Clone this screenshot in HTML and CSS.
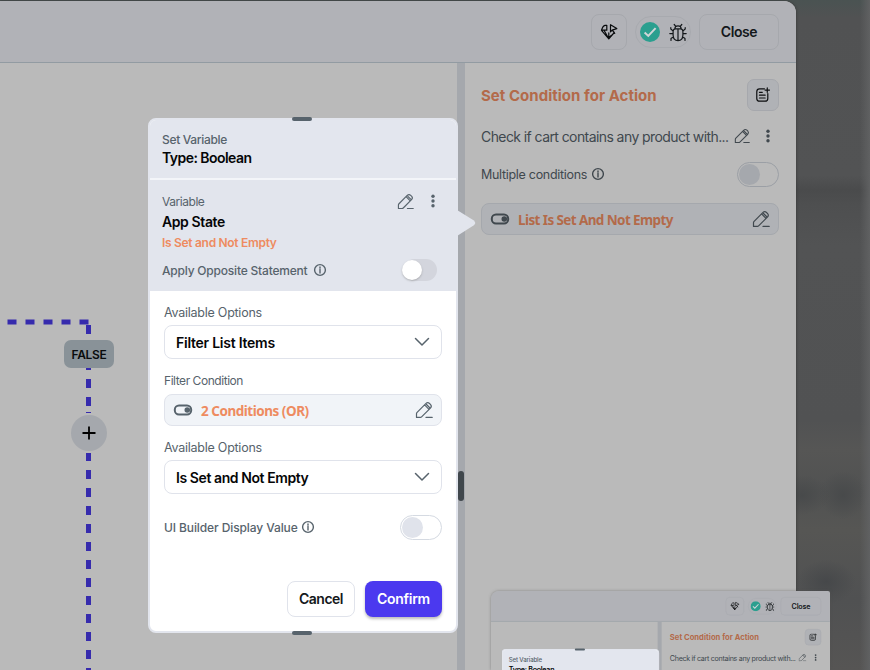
FILE: index.html
```
<!DOCTYPE html>
<html lang="en">
<head>
<meta charset="utf-8">
<title>Action Flow Editor</title>
<link rel="stylesheet" href="styles.css">
</head>
<body>
<svg class="defs" aria-hidden="true">
  <symbol id="pencil" viewBox="0 0 18 18"><path d="M1.500 16.400V12.700Q1.500 12 2.100 11.400L10.800 2.600Q12.700.9 14.500 2.500L15.600 3.600Q17.100 5.300 15.400 7.100L6.600 15.900Q6.100 16.400 5.400 16.400ZM9.600 3.900 14 8.300M11.500 3.500 14.500 6.500M11 16.400H17.200"/></symbol>
  <symbol id="info" viewBox="0 0 14 14"><circle cx="7" cy="7" r="5.4"/><path d="M7 6.3V10M7 3.9V5.1"/></symbol>
  <symbol id="dots" viewBox="0 0 6 16"><circle cx="3" cy="3.2" r="1.7"/><circle cx="3" cy="8" r="1.7"/><circle cx="3" cy="12.8" r="1.7"/></symbol>
  <symbol id="switch" viewBox="0 0 20 12"><rect x="1.8" y="1.6" width="16.4" height="8.8" rx="4.2"/><circle class="dot" cx="14.3" cy="6" r="2.8"/></symbol>
  <symbol id="chevron" viewBox="0 0 16 10"><path d="M1.5 1.5 8 8 14.5 1.5"/></symbol>
  <symbol id="bug" viewBox="0 0 18 20"><path d="M4.1 8.2Q4.3 6 6.3 5.8H11.7Q13.7 6 13.9 8.2V12Q13.9 17.5 9 17.7 4.1 17.5 4.1 12ZM5.8 5.7Q6 2.9 9 2.9T12.2 5.7M6.6 3.2 5.2 1.5M11.4 3.2 12.8 1.5M9 6V17.5M4 10.6H.8M14 10.6H17.2M4.2 7.9 1.8 6.1V4.5M13.8 7.9 16.2 6.1V4.5M4.5 13.8 2 15.5V17.4M13.5 13.8 16 15.5V17.4"/></symbol>
  <symbol id="gem" viewBox="0 0 18 18"><path d="M6.800 2.300H5Q2.800 2.800 1.500 7.200H6.800ZM1.500 7.300 8.800 15.800 14.300 9.500M4 7.300 8.800 15.800V9.800M10.500 1.700V8.800L12.100 7.100 16.800 5.600ZM12.300 7.200 14.700 10.400M6.500 12.300 8.800 15.200 11.200 12.300"/></symbol>
  <symbol id="note" viewBox="0 0 18 18"><path d="M10.6 2.1H5.2Q2 2.1 2 5.3V12.8Q2 16 5.2 16H11.2Q14.4 16 14.4 12.8V7.4M13.8 1V6M11.3 3.5H16.3M5 6H8.2M5 9.2H11.4M5 12.4H11.4"/></symbol>
  <symbol id="check" viewBox="0 0 20 20"><circle cx="10" cy="10" r="10"/><path d="M4.6 10.4 8.3 13.9 15.6 6.1"/></symbol>
</svg>

<main class="window">
  <header class="bar">
    <span class="tool"><svg class="icon gem"><use href="#gem"/></svg></span>
    <span class="status"><svg class="check"><use href="#check"/></svg><svg class="icon bug"><use href="#bug"/></svg></span>
    <span class="close">Close</span>
  </header>
  <div class="work">
    <section class="canvas">
      <svg class="wires" viewBox="0 0 457 607"><path d="M7.500 259H89" stroke-dasharray="9 9"/><path d="M88.500 262V350" stroke-dasharray="9 9"/><path d="M88.500 349V350"/><path d="M88.500 390V607" stroke-dasharray="9 9" stroke-dashoffset="1"/></svg>
      <span class="branch">FALSE</span>
      <span class="add"><svg viewBox="0 0 14 14"><path d="M7 .5V13.500M.5 7H13.500"/></svg></span>
    </section>
    <div class="splitter"></div>
    <aside class="panel">
      <div class="row head"><h1>Set Condition for Action</h1><span class="note"><svg class="icon"><use href="#note"/></svg></span></div>
      <div class="row desc"><span class="summary">Check if cart contains any product with...</span><svg class="icon pen"><use href="#pencil"/></svg><svg class="more"><use href="#dots"/></svg></div>
      <div class="row multi"><span class="multi-label">Multiple conditions</span><svg class="icon info"><use href="#info"/></svg><span class="toggle"></span></div>
      <div class="chip"><svg class="icon sw"><use href="#switch"/></svg><span class="chip-text list">List Is Set And Not Empty</span><svg class="icon pen"><use href="#pencil"/></svg></div>
    </aside>
  </div>
</main>

<i class="scroll"></i>

<section class="dialog">
  <i class="grip top"></i><i class="grip bottom"></i>
  <svg class="pointer" viewBox="0 0 20 26"><path d="M0 0 16.500 10.200Q20 13 16.500 15.600L0 26Z"/></svg>
  <div class="title"><span class="t-set">Set Variable</span><strong class="t-type">Type: Boolean</strong></div>
  <div class="variable">
    <div class="row var"><span class="t-var">Variable</span><svg class="icon pen"><use href="#pencil"/></svg><svg class="more"><use href="#dots"/></svg></div>
    <strong class="t-app">App State</strong>
    <span class="t-is">Is Set and Not Empty</span>
    <div class="row opp"><span class="t-opp">Apply Opposite Statement</span><svg class="icon info"><use href="#info"/></svg><span class="slide"></span></div>
  </div>
  <div class="form">
    <label class="t-avail">Available Options</label>
    <div class="select"><span class="t-filter">Filter List Items</span><svg class="icon chev"><use href="#chevron"/></svg></div>
    <label class="t-cond">Filter Condition</label>
    <div class="chip"><svg class="icon sw"><use href="#switch"/></svg><span class="chip-text two">2 Conditions (OR)</span><svg class="icon pen"><use href="#pencil"/></svg></div>
    <label class="t-avail">Available Options</label>
    <div class="select"><span class="t-not">Is Set and Not Empty</span><svg class="icon chev"><use href="#chevron"/></svg></div>
    <div class="row display"><span class="t-ui">UI Builder Display Value</span><svg class="icon info"><use href="#info"/></svg><span class="toggle"></span></div>
    <div class="actions"><button class="cancel">Cancel</button><button class="confirm">Confirm</button></div>
  </div>
</section>

<div class="preview">
  <div class="mini">
    <header class="bar">
      <span class="tool"><svg class="icon gem"><use href="#gem"/></svg></span>
      <span class="status"><svg class="check"><use href="#check"/></svg><svg class="icon bug"><use href="#bug"/></svg></span>
      <span class="close">Close</span>
    </header>
    <div class="work">
      <section class="canvas"></section>
      <div class="splitter"></div>
      <aside class="panel">
        <div class="row head"><h1>Set Condition for Action</h1><span class="note"><svg class="icon"><use href="#note"/></svg></span></div>
        <div class="row desc"><span class="summary">Check if cart contains any product with...</span><svg class="icon pen"><use href="#pencil"/></svg><svg class="more"><use href="#dots"/></svg></div>
      </aside>
    </div>
    <section class="dialog">
      <i class="grip top"></i>
      <div class="title"><span class="t-set">Set Variable</span><strong class="t-type">Type: Boolean</strong></div>
    </section>
  </div>
</div>
</body>
</html>
```
FILE: styles.css
```
* { box-sizing: border-box; }
body {
  margin: 0; width: 870px; height: 670px; overflow: hidden; position: relative;
  font-family: Inter, "Liberation Sans", sans-serif; color: #57636c;
  background:
    linear-gradient(90deg, transparent 860px, #606162 870px),
    radial-gradient(ellipse 28px 20px at 802px 495px, #484a4b, transparent),
    radial-gradient(ellipse 24px 24px at 843px 495px, #484a4b, transparent),
    radial-gradient(ellipse 30px 22px at 826px 582px, #46484a, transparent),
    linear-gradient(180deg, #4a5352 0, #515253 18px, #525354 175px, #4a4b4c 190px, #4e4f50 205px, #525354 245px, #515253 420px, #565655 450px, #515252 490px, #565654 530px, #505152 600px, #565554 670px);
}
.defs { position: absolute; width: 0; height: 0; }
svg { display: block; flex: none; }
.icon { fill: none; stroke: currentColor; stroke-width: 1.35; stroke-linejoin: round; stroke-linecap: round; }
.row { display: flex; align-items: center; white-space: nowrap; }
.window { display: flex; flex-direction: column; width: 796px; height: 669px; margin-top: 1px; border-radius: 0 12px 0 0; overflow: hidden; background: #bababa; box-shadow: 0 0 3px #333; }
.bar { display: flex; align-items: center; justify-content: flex-end; flex: none; height: 62px; padding-right: 17px; background: #b1b2b7; border-bottom: 1px solid #929ba2; color: #14181b; }
.tool { display: grid; place-items: center; width: 36px; height: 36px; border: 1px solid #a6a8ad; border-radius: 8px; }
.gem { width: 18px; height: 18px; color: #080a0c; stroke-width: 1.2; }
.status { display: flex; align-items: center; gap: 8px; width: 56px; height: 32px; margin: 0 8px; padding-left: 4px; border: 1px solid #a8aaaf; border-radius: 16px; }
.check { width: 20px; height: 20px; fill: #2b9f8f; }
.check path, #check path { fill: none; stroke: #d0d5d7; stroke-width: 2; }
.bug { width: 18px; height: 20px; stroke-width: 1.2; position: relative; top: 1px; left: .5px; }
.close { display: grid; place-items: center; width: 80px; height: 36px; border: 1px solid #a6a8ad; border-radius: 8px; font-size: 14px; font-weight: 600; letter-spacing: -.4px; }
.work { display: flex; flex: 1; min-height: 0; }
.canvas { position: relative; width: 457px; }
.wires { width: 457px; height: 607px; fill: none; stroke: #362bad; stroke-width: 5; }
.branch { position: absolute; left: 64px; top: 277px; display: grid; place-items: center; width: 50px; height: 28px; border-radius: 7px; background: #899298; color: #0a0c0d; font-size: 12px; font-weight: 600; letter-spacing: -.3px; }
.add { position: absolute; left: 71px; top: 352px; display: grid; place-items: center; width: 36px; height: 36px; border-radius: 50%; background: #a5a8ad; }
.add svg { width: 14px; height: 14px; stroke: #000; stroke-width: 1.8; }
.splitter { width: 8px; background: #a5a8ad; }
.panel { flex: 1; padding: 16px 17px 0 16px; color: #40484e; }
.head { justify-content: space-between; height: 32px; }
h1 { margin: 0; color: #b36a4a; font-size: 15px; font-weight: 700; letter-spacing: .03px; }
.note { display: grid; place-items: center; width: 32px; height: 32px; border: 1px solid #a6a8ad; border-radius: 7px; background: #b0b2b6; color: #0c0e10; }
.note svg { width: 16px; height: 16px; }
.desc { height: 24px; margin-top: 13px; }
.summary { width: 253px; font-size: 14px; letter-spacing: -.58px; }
.pen { width: 18px; height: 18px; stroke-width: 1.2; }
.more { width: 6px; height: 16px; fill: currentColor; }
.desc .pen { width: 16px; height: 16px; }
.desc .more { margin-left: 15px; }
.multi { height: 26px; margin-top: 13px; }
.multi-label { width: 110px; font-size: 12.500px; letter-spacing: -.3px; }
.info { width: 14px; height: 14px; stroke-width: 1.4; }
.toggle { display: block; width: 42px; height: 25px; margin-left: auto; padding: 1px; border: 1px solid #9b9fa5; border-radius: 13px; }
.toggle::before { content: ""; display: block; width: 21px; height: 21px; border-radius: 50%; background: #a5a8ad; }
.chip { display: flex; align-items: center; height: 32px; padding: 0 8px; border: 1px solid #a5a8ad; border-radius: 8px; background: #b0b2b6; white-space: nowrap; }
.panel .chip { margin-top: 16px; }
.sw { width: 20px; height: 12px; stroke-width: 2; }
.dot, #switch .dot { fill: currentColor; stroke: none; }
.chip-text { margin: 1px auto 0 8px; color: #b36a4a; font: 700 13.500px "Noto Sans", sans-serif; letter-spacing: -.48px; }
.list { letter-spacing: -.6px; }
.scroll { position: absolute; left: 458px; top: 471px; width: 6px; height: 30px; border-radius: 3px; background: #40474c; }

.dialog { position: absolute; left: 148px; top: 118px; display: flex; flex-direction: column; width: 310px; height: 515px; border: 2px solid #e2e5ed; border-radius: 8px; background: #fff; white-space: nowrap; }
.dialog strong { color: #050607; font-weight: 600; }
.grip { position: absolute; left: 142px; width: 20px; height: 4px; border-radius: 2px; background: #57636c; }
.top { top: -3.500px; }
.bottom { bottom: -3.500px; }
.pointer { position: absolute; left: 307px; top: 90px; width: 20px; height: 26px; fill: #e2e5ed; }
.title { display: flex; flex-direction: column; height: 60px; padding: 12px 12px 0; background: #e3e6ee; border-bottom: 2px solid #f3f5f9; border-radius: 6px 6px 0 0; }
.t-set { font-size: 12px; line-height: 16px; font-weight: 500; letter-spacing: -.32px; }
.t-type { font-size: 14px; line-height: 20px; letter-spacing: -.55px; }
.variable { display: flex; flex-direction: column; height: 111px; padding: 10px 19px 0 12px; background: #e2e5ed; }
.var { height: 22px; }
.t-var { flex: 1; font-size: 12px; letter-spacing: -.45px; }
.var .pen { width: 17px; height: 17px; margin-right: 16px; }
.var .more { margin-right: 1px; }
.t-app { font-size: 14px; line-height: 20px; letter-spacing: -.4px; }
.t-is { color: #ee8b60; font-size: 12px; font-weight: 600; line-height: 21px; letter-spacing: -.3px; }
.opp { height: 26px; margin-top: 4px; }
.t-opp { width: 151px; font-size: 12px; font-weight: 500; letter-spacing: -.2px; }
.slide { position: relative; width: 33px; height: 22px; margin-left: auto; border-radius: 11px; background: #d3d5dd; }
.slide::before { content: ""; position: absolute; left: -2px; top: 1px; width: 20px; height: 20px; border-radius: 50%; background: #fff; box-shadow: 0 1px 2px #7777; }
.form { display: flex; flex-direction: column; padding: 14px 14px 0; }
label { height: 16px; line-height: 16px; font-size: 12.500px; letter-spacing: -.25px; }
.t-cond { font-size: 12px; letter-spacing: -.45px; }
.select { display: flex; align-items: center; justify-content: space-between; height: 34px; margin: 4px 0 14px; padding: 0 11px; border: 1px solid #e0e3eb; border-radius: 8px; color: #050607; font-size: 14px; font-weight: 600; }
.t-filter { letter-spacing: -.25px; }
.t-not { letter-spacing: -.42px; }
.chev { width: 16px; height: 10px; color: #57636c; stroke-width: 1.5; }
.form .chip { margin: 5px 0 14px; border-color: #e0e3eb; background: #f1f4f8; }
.form .chip-text { color: #ee8b60; }
.display { height: 26px; margin-top: 6px; }
.t-ui { width: 137px; font-size: 12px; font-weight: 500; letter-spacing: -.1px; }
.form .toggle { border-color: #d5dae2; }
.form .toggle::before { background: #e0e3eb; }
.actions { display: flex; justify-content: flex-end; gap: 10px; margin-top: 41px; }
button { height: 36px; padding: 0 0 1px; border-radius: 8px; font: 600 14px Inter, sans-serif; }
.cancel { width: 68px; border: 1px solid #e0e3eb; background: #fff; color: #14181b; letter-spacing: -.5px; }
.confirm { width: 77px; border: 0; background: #4b39ef; color: #fff; box-shadow: 0 2px 3px #0004; letter-spacing: -.3px; }

.preview { position: absolute; left: 491px; top: 591px; width: 339px; height: 79px; overflow: hidden; border-radius: 8px 2px 0 0; box-shadow: 0 0 3px #5558; }
.mini { position: relative; display: flex; flex-direction: column; width: 667px; height: 160px; transform: scale(.508); transform-origin: 0 0; background: #bababa; }
.mini .bar { height: 60px; }
.mini .canvas { width: 328px; }
.mini .panel { padding-top: 15px; }
.mini .desc { margin-top: 12px; }
.mini .dialog { left: 21px; top: 114px; }
```
